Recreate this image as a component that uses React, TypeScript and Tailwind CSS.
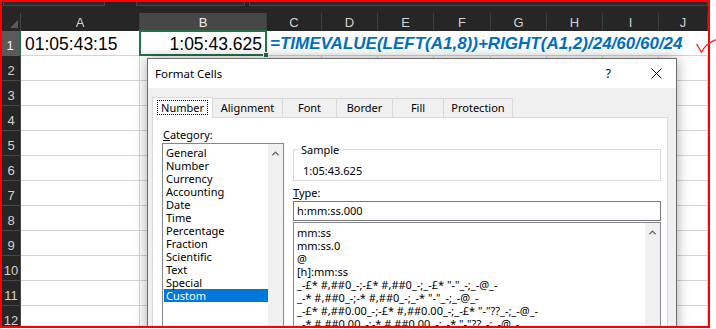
import { ChevronUp } from "lucide-react";

const cellFont = { fontFamily: '"Liberation Sans", Arial, sans-serif' };
const uiFont = { fontFamily: '"Noto Sans", "Open Sans", sans-serif' };

const headers = [
    { l: "A", c: "w-[119px]" },
    { l: "B", c: "w-[127px] bg-[#474747] text-[#f0f0f0]" },
    { l: "C", c: "w-[55px]" },
    { l: "D", c: "w-[56px]" },
    { l: "E", c: "w-[56px]" },
    { l: "F", c: "w-[57px]" },
    { l: "G", c: "w-[56px]" },
    { l: "H", c: "w-[56px]" },
    { l: "I", c: "w-[56px]" },
    { l: "J", c: "flex-1" },
];

const bodyCols = ["w-[119px]", "w-[127px]", "w-[55px]", "w-[56px]", "w-[56px]", "w-[57px]", "w-[56px]", "w-[56px]", "w-[56px]", "flex-1"];

const categories = ["General", "Number", "Currency", "Accounting", "Date", "Time", "Percentage", "Fraction", "Scientific", "Text", "Special", "Custom"];

const types = [
    "mm:ss",
    "mm:ss.0",
    "@",
    "[h]:mm:ss",
    '_-£* #,##0_-;-£* #,##0_-;_-£* "-"_-;_-@_-',
    '_-* #,##0_-;-* #,##0_-;_-* "-"_-;_-@_-',
    '_-£* #,##0.00_-;-£* #,##0.00_-;_-£* "-"??_-;_-@_-',
    '_-* #,##0.00_-;-* #,##0.00_-;_-* "-"??_-;_-@_-',
];

const tabs = [
    { t: "Alignment", c: "w-[70px]" },
    { t: "Font", c: "w-[54px]" },
    { t: "Border", c: "w-[56px]" },
    { t: "Fill", c: "w-[51px]" },
    { t: "Protection", c: "w-[69px]" },
];

function Check({ className }: { className: string }) {
    return (
        <svg className={className} viewBox="0 0 26 18" fill="none">
            <path d="M1 7 C3 10 5 14 7 17 C10 11 16 5 25 1" stroke="#ff1a1a" strokeWidth="1.6" strokeLinecap="round" />
        </svg>
    );
}

function ScrollUp() {
    return (
        <div className="w-[15px] h-full bg-[#f0f0f0] flex justify-center pt-[4px]">
            <ChevronUp className="w-[11px] h-[11px] text-[#606060]" strokeWidth={3} />
        </div>
    );
}

export default function App() {
    return (
        <div className="relative w-[716px] h-[329px] bg-white overflow-hidden">
            <div className="relative w-[710px] h-[328px] border-2 border-[#ff0000] overflow-hidden bg-white">
                {/* ribbon strip */}
                <div className="h-[11px] bg-[#262626] flex gap-[4px]">
                    <div className="ml-[1px] w-[102px] h-[4px] border-x border-b border-[#454545] bg-[#2c2c2c]" />
                    <div className="ml-[27px] w-[109px] h-[4px] border-x border-b border-[#454545] bg-[#2c2c2c]" />
                    <div className="flex-1 h-[4px] border-x border-b border-[#454545] bg-[#2c2c2c]" />
                </div>

                {/* column headers */}
                <div className="flex h-[18px] bg-[#262626] text-[13px] text-[#d2d2d2]" style={cellFont}>
                    <div className="w-[19px] border-r border-[#444] flex items-end justify-end pr-[2px] pb-[3px]">
                        <svg width="8" height="8" viewBox="0 0 8 8">
                            <polygon points="8,0 8,8 0,8" fill="#5a5a5a" />
                        </svg>
                    </div>
                    {headers.map((h) => (
                        <div key={h.l} className={`${h.c} border-r border-[#3e3e3e] flex items-center justify-center pt-[1px]`}>
                            {h.l}
                        </div>
                    ))}
                </div>

                {/* row 1 */}
                <div className="flex h-[25px]" style={cellFont}>
                    <div className="w-[19px] bg-[#5a5a5a] border-r-2 border-[#217346] text-[13px] text-[#f2f2f2] flex items-center justify-center pt-[5px] pr-[1px]">1</div>
                    <div className="w-[119px] border-r border-b border-[#d4d4d4] flex items-end pl-[4px] pb-[1px] text-[17.5px] leading-[20px] text-black">01:05:43:15</div>
                    <div className="relative w-[127px] border-r border-b border-[#d4d4d4] flex items-end justify-end pr-[4px] pb-[1px] text-[17.5px] leading-[20px] text-black">
                        1:05:43.625
                        <div className="absolute -left-[1px] -top-[1px] -right-[1px] -bottom-[1px] border-2 border-[#217346]" />
                        <div className="absolute -right-[3px] -bottom-[3px] w-[6px] h-[6px] bg-[#217346] border border-white" />
                    </div>
                    <div className="flex-1 border-b border-[#d4d4d4] flex items-end pl-[3px] pb-[1px] text-[17px] leading-[20px] font-bold italic text-[#0070c0] whitespace-nowrap">
                        =TIMEVALUE(LEFT(A1,8))+RIGHT(A1,2)/24/60/60/24
                    </div>
                </div>

                {/* rows 2..12 */}
                {Array.from({ length: 11 }, (_, i) => i + 2).map((n) => (
                    <div key={n} className="flex h-[25px]" style={cellFont}>
                        <div className="w-[19px] bg-[#262626] border-r border-b border-[#484848] text-[13px] text-[#d2d2d2] flex items-center justify-center pt-[5px]">{n}</div>
                        {bodyCols.map((c, j) => (
                            <div key={j} className={`${c} border-r border-b border-[#d4d4d4]`} />
                        ))}
                    </div>
                ))}

                <Check className="absolute left-[386px] top-[200px] w-[26px] h-[18px]" />

                {/* Format Cells dialog */}
                <div className="absolute left-[145px] top-[56px] w-[530px] h-[300px] border border-[#6e6e6e] bg-[#f0f0f0] shadow-[0_0_12px_rgba(0,0,0,0.35)] text-[11px] text-black" style={uiFont}>
                    <div className="h-[29px] bg-white flex items-center pl-[7px] pr-[14px]">
                        <span className="text-[11.5px]">Format Cells</span>
                        <span className="ml-auto text-[12px]">?</span>
                        <svg className="ml-[40px]" width="11" height="11" viewBox="0 0 11 11">
                            <path d="M0.5 0.5 L10.5 10.5 M10.5 0.5 L0.5 10.5" stroke="#111" strokeWidth="1" />
                        </svg>
                    </div>

                    <div className="pl-[4px] pt-[9px]">
                        <div className="flex items-end h-[20px]">
                            <div className="relative z-10 w-[61px] h-[21px] -mb-[1px] bg-white border-l border-t border-r border-[#d9d9d9] flex items-center justify-center pb-[1px]">
                                <span className="border border-dotted border-black px-[3px] leading-[13px]">Number</span>
                            </div>
                            {tabs.map((t) => (
                                <div key={t.t} className={`${t.c} h-[19px] border-t border-r border-[#d9d9d9] bg-[#f0f0f0] flex items-center justify-center`}>
                                    {t.t}
                                </div>
                            ))}
                        </div>

                        <div className="w-[516px] h-[220px] bg-white border border-[#d9d9d9] flex pl-[9px] gap-[9px]">
                            <div className="w-[122px] flex flex-col">
                                <div className="pt-[10px] leading-[13px] pl-[1px]">
                                    <span className="underline">C</span>ategory:
                                </div>
                                <div className="mt-[2px] flex-1 border border-[#828790] flex">
                                    <div className="flex-1 pt-[2px] pl-[1px]">
                                        {categories.map((c) => (
                                            <div key={c} className={`h-[13px] leading-[13px] pl-[2px] ${c === "Custom" ? "bg-[#0078d7] text-white" : ""}`}>
                                                {c}
                                            </div>
                                        ))}
                                    </div>
                                    <ScrollUp />
                                </div>
                            </div>

                            <div className="w-[368px] flex flex-col">
                                <div className="relative mt-[31px] h-[32px] border border-[#dcdcdc] pl-[9px] pt-[14px] leading-[13px]">
                                    <span className="absolute -top-[7px] left-[6px] bg-white px-[1px] leading-[13px]">Sample</span>
                                    1:05:43.625
                                </div>
                                <div className="mt-[5px] leading-[13px]">
                                    <span className="underline">T</span>ype:
                                </div>
                                <div className="mt-[2px] h-[20px] border border-[#7a7a7a] flex items-center pl-[3px]">h:mm:ss.000</div>
                                <div className="mt-[1px] flex-1 border border-[#828790] flex">
                                    <div className="flex-1 pt-[3px] pl-[3px] whitespace-nowrap overflow-hidden">
                                        {types.map((t) => (
                                            <div key={t} className="h-[13px] leading-[13px]">
                                                {t}
                                            </div>
                                        ))}
                                    </div>
                                    <ScrollUp />
                                </div>
                            </div>
                        </div>
                    </div>
                </div>
            </div>
            <Check className="absolute left-[696px] top-[37px] w-[20px] h-[18px]" />
        </div>
    );
}
